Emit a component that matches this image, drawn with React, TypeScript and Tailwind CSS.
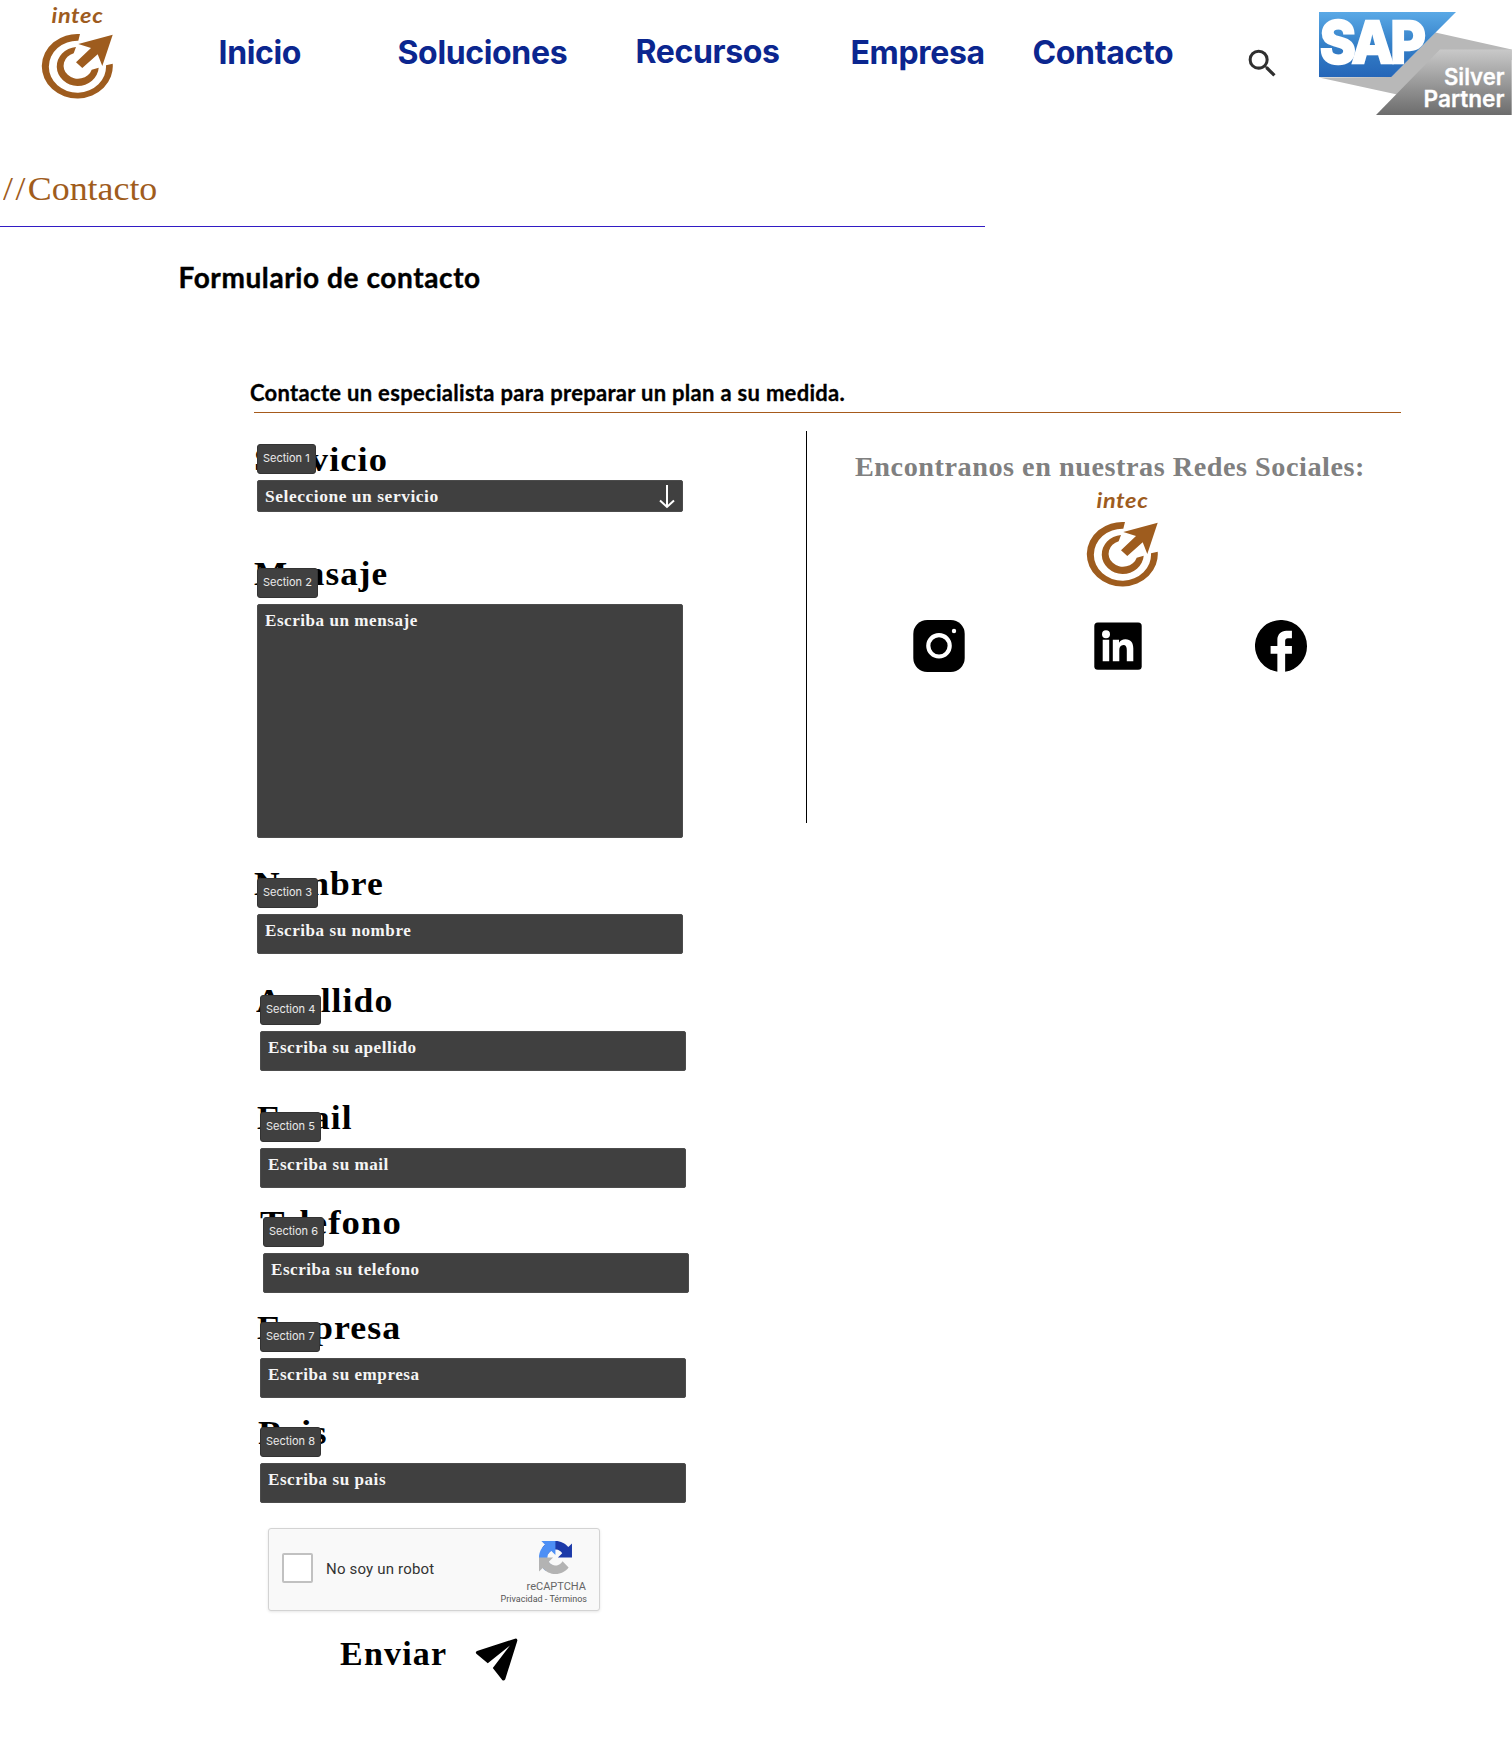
import { MdSearch } from "react-icons/md";

type FieldProps = {
  label: string;
  tag: string;
  placeholder: string;
  wrap: string;
  labelClass: string;
  boxClass: string;
  textClass?: string;
  arrow?: boolean;
};

const fields: FieldProps[] = [
  { label: "Servicio", tag: "Section 1", placeholder: "Seleccione un servicio", wrap: "mt-[27px] ml-[257px]", labelClass: "-ml-[3px] scale-x-[1.072]", boxClass: "h-8", textClass: "scale-x-[1.09]", arrow: true },
  { label: "Mensaje", tag: "Section 2", placeholder: "Escriba un mensaje", wrap: "mt-[42px] ml-[257px]", labelClass: "mb-[10px] -ml-[3px] scale-x-[1.034]", boxClass: "h-[234px]" },
  { label: "Nombre", tag: "Section 3", placeholder: "Escriba su nombre", wrap: "mt-[26px] ml-[257px]", labelClass: "mb-[10px] -ml-[3px] scale-x-[1.044]", boxClass: "h-10" },
  { label: "Apellido", tag: "Section 4", placeholder: "Escriba su apellido", wrap: "mt-[27px] ml-[260px]", labelClass: "mb-[10px] -ml-[4px] scale-x-[1.05]", boxClass: "h-10" },
  { label: "Email", tag: "Section 5", placeholder: "Escriba su mail", wrap: "mt-[27px] ml-[260px]", labelClass: "mb-[10px] -ml-[3px] scale-x-[1.04]", boxClass: "h-10" },
  { label: "Telefono", tag: "Section 6", placeholder: "Escriba su telefono", wrap: "mt-[15px] ml-[263px]", labelClass: "mb-[10px] -ml-[3px] scale-x-[1.08]", boxClass: "h-10" },
  { label: "Empresa", tag: "Section 7", placeholder: "Escriba su empresa", wrap: "mt-[15px] ml-[260px]", labelClass: "mb-[10px] -ml-[3px] scale-x-[1.055]", boxClass: "h-10" },
  { label: "Pais", tag: "Section 8", placeholder: "Escriba su pais", wrap: "mt-[15px] ml-[260px]", labelClass: "mb-[10px] -ml-[2px] scale-x-[1.08]", boxClass: "h-10" },
];

function IntecLogo({ textY, className }: { textY: number; className: string }) {
  return (
    <svg viewBox="40 0 75 104" width="75" height="104" className={className} fill="#9e5c1e" role="img" aria-label="intec">
      <text x="51.5" y={textY} textLength="52" lengthAdjust="spacingAndGlyphs" letterSpacing="0.6" fontFamily="Lato, sans-serif" fontWeight="700" fontStyle="italic" fontSize="21.5">intec</text>
      <path d="M80 34A35.5 32.3 0 1 0 112.7 63.7L106 65.3A28.6 26 0 1 1 78.3 40.7Z" />
      <path d="M76 47A21 19.5 0 1 0 98.7 67.7L91.7 69.7A14.4 13 0 1 1 73.7 53.3Z" />
      <path d="M112.7 34.7L78.3 44L91 48L76 62.3L82.3 68L97.7 54.3L102.3 66Z" />
    </svg>
  );
}

function SapBadge() {
  return (
    <svg viewBox="1319 0 193 120" width="193" height="120" className="shrink-0" role="img" aria-label="SAP Silver Partner">
      <defs>
        <linearGradient id="sapBlue" x1="0" y1="0" x2="0" y2="1">
          <stop offset="0" stopColor="#5aa9e6" />
          <stop offset="0.5" stopColor="#3580c8" />
          <stop offset="1" stopColor="#2566b8" />
        </linearGradient>
        <linearGradient id="sapGray" x1="0" y1="0" x2="0" y2="1">
          <stop offset="0" stopColor="#c9c9c9" />
          <stop offset="1" stopColor="#6c6c6c" />
        </linearGradient>
      </defs>
      <path d="M1319 77.5L1391 77L1435.5 32.5L1511.7 49.5V60L1396 94.2Z" fill="#b8b8b8" />
      <path d="M1319 12H1456L1391.3 77H1319Z" fill="url(#sapBlue)" />
      <path d="M1440 49.5H1511.7V115H1376Z" fill="url(#sapGray)" />
      <g fill="#fff" stroke="#fff">
        <text x="1320" y="62.5" fontFamily="Inter, sans-serif" fontSize="58" fontWeight="800" letterSpacing="-3" textLength="103" lengthAdjust="spacingAndGlyphs" strokeWidth="2.5">SAP</text>
        <g fontFamily="Inter, sans-serif" fontSize="22.5" fontWeight="600" strokeWidth="0.3">
          <text x="1444" y="84.5" textLength="60.5" lengthAdjust="spacingAndGlyphs">Silver</text>
          <text x="1423.5" y="106.5" textLength="81" lengthAdjust="spacingAndGlyphs">Partner</text>
        </g>
      </g>
    </svg>
  );
}

function Field({ label, tag, placeholder, wrap, labelClass, boxClass, textClass = "scale-x-[1.067]", arrow }: FieldProps) {
  return (
    <div className={`w-[426px] ${wrap}`}>
      <label className={`block h-10 w-fit origin-left text-[34px] leading-10 font-bold tracking-[1px] whitespace-nowrap text-black ${labelClass}`}>{label}</label>
      <div className={`relative flex items-start justify-between rounded-[2px] border border-[#4c4c4c] bg-[#404040] pt-[6px] pr-[7px] pl-[7px] ${boxClass}`}>
        <span className="absolute bottom-full -left-px mb-[7px] flex h-[30px] items-center rounded-[3px] border border-[#333] bg-[#404040] px-[5px] pb-[2px] font-[Inter,sans-serif] text-[11px] whitespace-nowrap text-white/90">{tag}</span>
        <span className={`origin-left text-base leading-5 font-bold tracking-[0.5px] whitespace-nowrap text-[#f5f5f5] ${textClass}`}>{placeholder}</span>
        {arrow && (
          <svg width="16" height="24" viewBox="0 0 16 24" className="-mt-[2px]" fill="none" stroke="#fff" strokeWidth="2">
            <path d="M8 0V22M1 15.5L8 22L15 15.5" />
          </svg>
        )}
      </div>
    </div>
  );
}

function Recaptcha() {
  return (
    <div className="mt-[25px] ml-[268px] flex h-[83px] w-[332px] rounded-[3px] border border-[#d3d3d3] bg-[#f9f9f9] font-[Roboto,sans-serif] shadow-[0_1px_3px_rgba(0,0,0,0.1)]">
      <div className="mt-6 ml-[13px] h-[30px] w-[31px] rounded-[2px] border-2 border-[#c1c1c1] bg-white" />
      <span className="mt-[30px] ml-[13px] w-[172px] text-[15px] leading-5 tracking-[0.18px] text-[#333]">No soy un robot</span>
      <div className="flex w-[88px] flex-col items-end">
        <svg viewBox="0 0 64 64" width="33" height="33" className="mt-3 mr-[14px]">
          <path fill="#1c3aa9" d="M64 31.955l-.033-1.37V4.687l-7.16 7.16C50.948 4.674 42.033.093 32.05.093c-10.4 0-19.622 4.96-25.458 12.64l11.736 11.86a15.55 15.55 0 0 1 4.754-5.334c2.05-1.6 4.952-2.906 8.968-2.906.485 0 .86.057 1.135.163 4.976.393 9.288 3.14 11.828 7.124l-8.307 8.307L64 31.953" />
          <path fill="#4d8ff5" d="M31.862.094l-1.37.033H4.594l7.16 7.16C4.58 13.147 0 22.06 0 32.046c0 10.4 4.96 19.622 12.64 25.458L24.5 45.768a15.55 15.55 0 0 1-5.334-4.754c-1.6-2.05-2.906-4.952-2.906-8.968 0-.485.057-.86.163-1.135.393-4.976 3.14-9.288 7.124-11.828l8.307 8.307L31.86.095" />
          <path fill="#b3b3b3" d="M.001 32.045l.033 1.37v25.898l7.16-7.16c5.86 7.173 14.774 11.754 24.76 11.754 10.4 0 19.622-4.96 25.458-12.64l-11.736-11.86a15.55 15.55 0 0 1-4.754 5.334c-2.05 1.6-4.952 2.906-8.968 2.906-.485 0-.86-.057-1.135-.163-4.976-.393-9.288-3.14-11.828-7.124l8.307-8.307c-10.522.04-22.4.066-27.295-.005" />
        </svg>
        <span className="mt-[6px] text-[11px] leading-[14px] text-[#666]">reCAPTCHA</span>
        <span className="-mr-px text-[9px] leading-[11px] whitespace-nowrap text-[#555]">Privacidad - Términos</span>
      </div>
    </div>
  );
}

function SocialIcons() {
  return (
    <div className="mt-7 ml-[57px] flex items-start">
      <svg width="52" height="52" viewBox="0 0 52 52" className="mr-[129px] ml-[49px]">
        <rect x="0.3" y="0" width="51.4" height="52" rx="14" fill="#000" />
        <circle cx="26" cy="25.8" r="10.7" fill="none" stroke="#fff" strokeWidth="4.2" />
        <circle cx="41" cy="11" r="2.2" fill="#fff" />
      </svg>
      <svg width="48" height="52" viewBox="0 0 48 52" className="mr-[113px]">
        <rect x="0.3" y="2.4" width="47.4" height="47.4" rx="3.5" fill="#000" />
        <g fill="#fff">
          <circle cx="12" cy="14.3" r="4" />
          <path d="M8.7 19.8H15.2V41.3H8.7ZM18.8 19.8H25V22.8C26.2 20.8 28.4 19.3 31.4 19.3C36.9 19.3 39.3 22.8 39.3 28.6V41.3H32.8V30.2C32.8 27 32 25 29.4 25C26.6 25 25.3 27.2 25.3 30.2V41.3H18.8Z" />
        </g>
      </svg>
      <svg width="52" height="52" viewBox="2 2 20 20">
        <path d="M22 12A10 10 0 1 0 10.6 21.9V15H8v-3h2.6V9.5c0-1.9 1.5-3.4 3.4-3.4h2.2v2.9h-1.6c-.6 0-1 .4-1 1v2h2.6v3h-2.6v6.9A10 10 0 0 0 22 12Z" />
      </svg>
    </div>
  );
}

const navItem = "h-10 whitespace-nowrap";

export default function App() {
  return (
    <div className="h-[1764px] w-[1512px] overflow-hidden bg-white font-['Liberation_Serif',serif]">
      <header className="flex h-[124px] items-start">
        <IntecLogo textY={23} className="ml-10 shrink-0" />
        <nav className="mt-[33px] ml-[103.5px] flex font-[Inter,sans-serif] text-[32px] leading-10 font-bold tracking-[-0.35px] text-[#0b268f]">
          <a className={`w-[179px] ${navItem}`}>Inicio</a>
          <a className={`w-[238px] ${navItem}`}>Soluciones</a>
          <a className={`-mt-px w-[215px] ${navItem}`}>Recursos</a>
          <a className={`w-[182px] ${navItem}`}>Empresa</a>
          <a className={`w-[211px] ${navItem}`}>Contacto</a>
        </nav>
        <MdSearch size={37} className="mt-[45px] mr-[38.5px] shrink-0 text-[#2f2f2f]" />
        <SapBadge />
      </header>

      <h1 className="mt-[45px] ml-[3px] h-10 w-fit origin-left scale-x-[1.055] text-[34px] leading-10 text-[#a05c1c]">
        <span className="tracking-[2.3px]">//</span>Contacto
      </h1>
      <div className="mt-[17px] h-px w-[985px] bg-[#321cc4]" />
      <h2 className="mt-[34px] ml-[178.5px] h-8 font-[Lato,sans-serif] text-[28px] leading-8 font-bold tracking-[0.6px] text-black [-webkit-text-stroke:0.4px_black]">Formulario de contacto</h2>
      <p className="mt-[86px] ml-[250px] h-7 font-[Lato,sans-serif] text-[22px] leading-7 font-bold tracking-[0.3px] text-black [-webkit-text-stroke:0.3px_black]">Contacte un especialista para preparar un plan a su medida.</p>
      <div className="mt-[5px] ml-[254px] h-px w-[1147px] bg-[#a65a1b]" />

      <main className="flex items-start">
        <form className="w-[806px]">
          {fields.map((f) => (
            <Field key={f.label} {...f} />
          ))}
          <Recaptcha />
          <button type="button" className="mt-[23px] ml-[340px] flex items-start text-black">
            <span className="w-[135px] text-left text-[34px] leading-10 font-bold tracking-[1.2px]">Enviar</span>
            <svg width="43" height="43" viewBox="676 383 128 128" className="mt-1">
              <path d="M795 385Q803 383 802 391L766 506Q762 512 757 508L729 472L780 405L714 458L680 430Q676 425 682 422Z" />
            </svg>
          </button>
        </form>
        <aside className="mt-[18px] h-[392px] border-l border-black">
          <h3 className="mt-5 ml-[48px] h-8 w-fit origin-left scale-x-[1.046] text-[27px] leading-8 font-bold tracking-[0.5px] whitespace-nowrap text-[#808080]">Encontranos en nuestras Redes Sociales:</h3>
          <IntecLogo textY={20} className="mt-[5px] ml-[278px]" />
          <SocialIcons />
        </aside>
      </main>
    </div>
  );
}
